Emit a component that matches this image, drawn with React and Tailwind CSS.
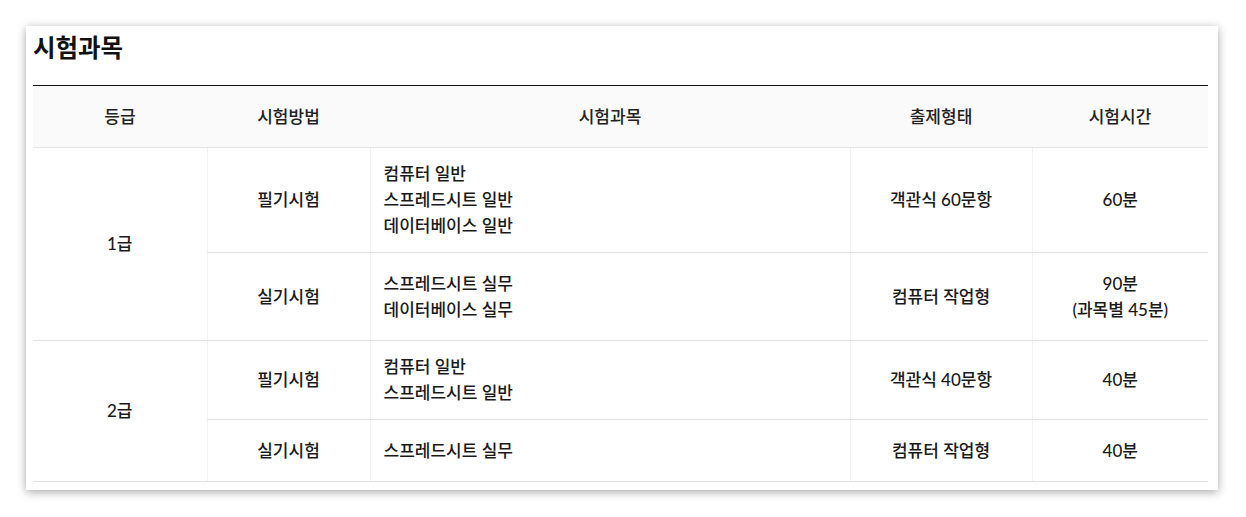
export default function App() {
  const font = { fontFamily: '"Lato", "Noto Sans CJK KR", sans-serif' };
  const th = 'border-b border-[#e3e3e3] font-medium text-[17px] text-[#222] text-center align-middle';
  const td = 'border-b border-[#e3e3e3] border-l border-l-[#f2f2f2] font-medium text-[17px] leading-[26px] text-[#1a1a1a] align-middle';

  return (
    <div className="w-[1246px] h-[517px] bg-white pt-[26px] pl-[26px]" style={font}>
      <div className="w-[1192px] h-[464px] bg-white shadow-[0_2px_9px_rgba(0,0,0,0.35)] pl-[7px] pr-[10px] pt-[7px]">
        <h2 className="text-[24.5px] leading-[30px] font-bold text-[#111] mb-[22px]">시험과목</h2>
        <table className="w-[1175px] border-collapse table-fixed border-t border-t-[#111]">
          <colgroup>
            <col className="w-[174px]" />
            <col className="w-[163px]" />
            <col className="w-[480px]" />
            <col className="w-[182px]" />
            <col className="w-[176px]" />
          </colgroup>
          <thead>
            <tr className="h-[62px] bg-[#fafafa]">
              <th className={th}>등급</th>
              <th className={th}>시험방법</th>
              <th className={th}>시험과목</th>
              <th className={th}>출제형태</th>
              <th className={th}>시험시간</th>
            </tr>
          </thead>
          <tbody>
            <tr className="h-[105px]">
              <td rowSpan={2} className={td + ' text-center border-l-0'}>1급</td>
              <td className={td + ' text-center'}>필기시험</td>
              <td className={td + ' pl-[13px]'}>
                컴퓨터 일반<br />스프레드시트 일반<br />데이터베이스 일반
              </td>
              <td className={td + ' text-center'}>객관식 60문항</td>
              <td className={td + ' text-center'}>60분</td>
            </tr>
            <tr className="h-[88px]">
              <td className={td + ' text-center'}>실기시험</td>
              <td className={td + ' pl-[13px]'}>
                스프레드시트 실무<br />데이터베이스 실무
              </td>
              <td className={td + ' text-center'}>컴퓨터 작업형</td>
              <td className={td + ' text-center'}>
                90분<br />(과목별 45분)
              </td>
            </tr>
            <tr className="h-[79px]">
              <td rowSpan={2} className={td + ' text-center border-l-0'}>2급</td>
              <td className={td + ' text-center'}>필기시험</td>
              <td className={td + ' pl-[13px]'}>
                컴퓨터 일반<br />스프레드시트 일반
              </td>
              <td className={td + ' text-center'}>객관식 40문항</td>
              <td className={td + ' text-center'}>40분</td>
            </tr>
            <tr className="h-[62px]">
              <td className={td + ' text-center'}>실기시험</td>
              <td className={td + ' pl-[13px]'}>스프레드시트 실무</td>
              <td className={td + ' text-center'}>컴퓨터 작업형</td>
              <td className={td + ' text-center'}>40분</td>
            </tr>
          </tbody>
        </table>
      </div>
    </div>
  );
}
